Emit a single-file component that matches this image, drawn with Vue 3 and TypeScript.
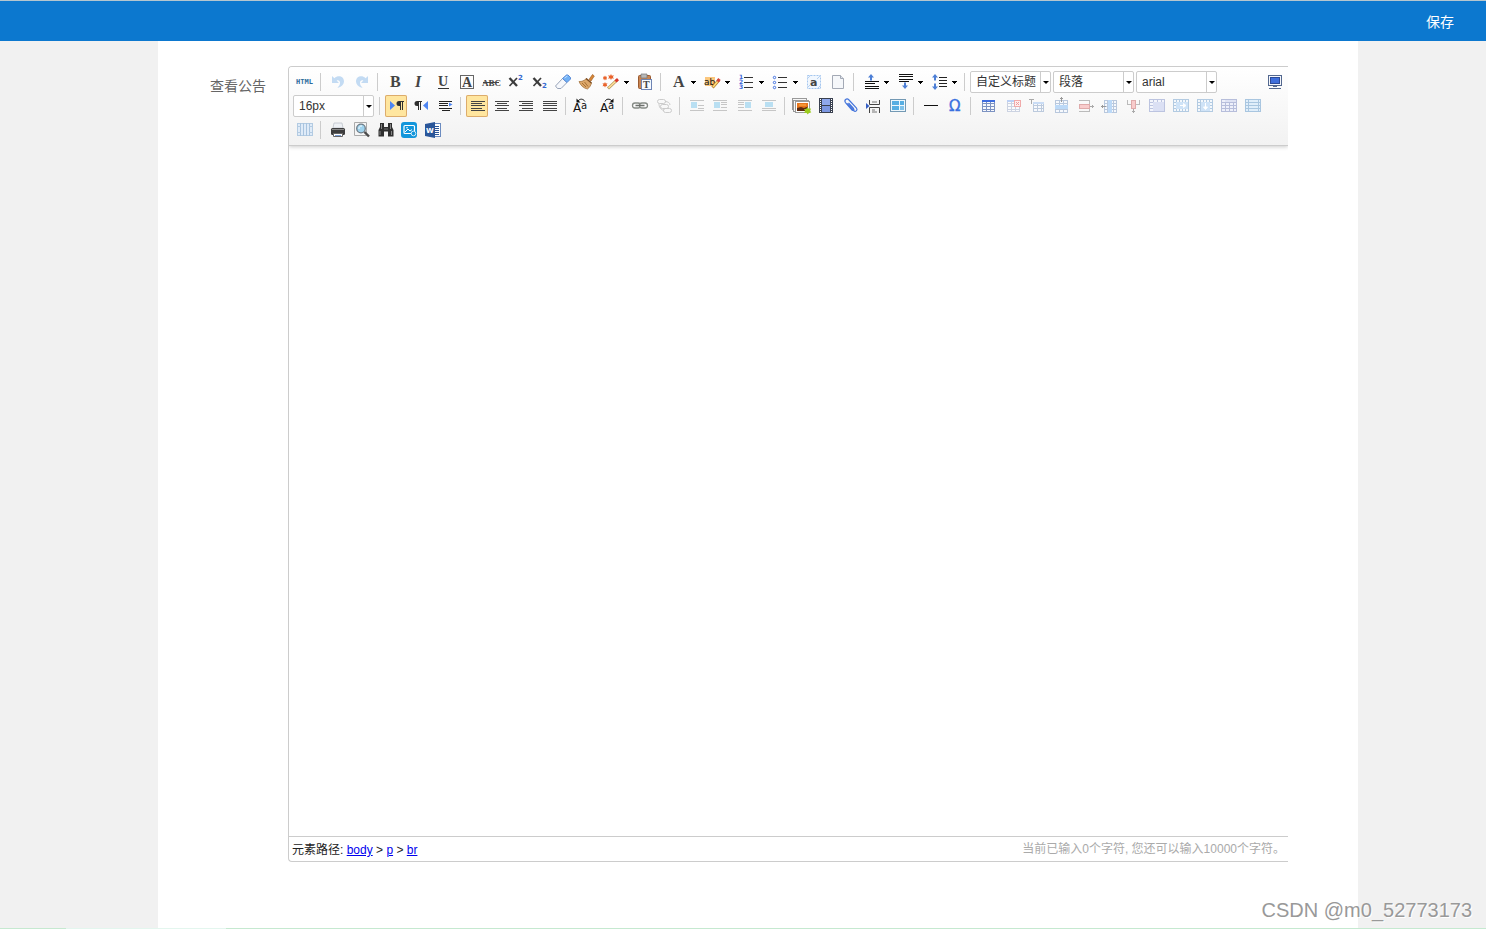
<script setup lang="ts">
import { ref } from 'vue'

interface ButtonItem {
  kind: 'button'
  name: string
  icon: string
  menu?: boolean
  active?: boolean
  disabled?: boolean
}
interface SelectItem {
  kind: 'select'
  name: string
  options: string[]
}
interface SeparatorItem {
  kind: 'sep'
}
type Item = ButtonItem | SelectItem | SeparatorItem

const sep: SeparatorItem = { kind: 'sep' }
const btn = (name: string, icon: string, extra: Partial<ButtonItem> = {}): ButtonItem => ({
  kind: 'button',
  name,
  icon,
  ...extra,
})
const off = { disabled: true }
const menu = { menu: true }

const rect = (x: number, y: number, w: number, h: number, fill: string) =>
  `<rect x="${x}" y="${y}" width="${w}" height="${h}" fill="${fill}"/>`
const crisp = (body: string) => `<g shape-rendering="crispEdges">${body}</g>`
const lines = (rows: number[][], fill: string) => crisp(rows.map(([x, y, w]) => rect(x, y, w, 1, fill)).join(''))
const serif = (t: string, x: number, y: number, size: number, extra = '') =>
  `<text x="${x}" y="${y}" font-family="Liberation Serif, serif" font-weight="bold" font-size="${size}" fill="#444" ${extra}>${t}</text>`
const sans = (t: string, x: number, y: number, size: number, fill: string) =>
  `<text x="${x}" y="${y}" font-family="DejaVu Sans, sans-serif" font-weight="bold" font-size="${size}" fill="${fill}">${t}</text>`
const plain = (t: string, x: number, y: number, size: number, fill: string) =>
  `<text x="${x}" y="${y}" font-family="DejaVu Sans, sans-serif" font-size="${size}" fill="${fill}">${t}</text>`

const frame = (x: number, y: number, w: number, h: number, c: string) =>
  rect(x, y, w, 1, c) + rect(x, y + h - 1, w, 1, c) + rect(x, y, 1, h, c) + rect(x + w - 1, y, 1, h, c)

const undoPath =
  '<path d="M6 5v7h7l-2.400-2.400c2-.8 3.400 .4 3.400 2.500 0 1.700-1 3-2.600 4.900 4-1 6.600-3.800 6.600-6.800 0-5-6-6.700-9.600-3z" fill="#c3dbf3"/>'
const chain =
  '<g fill="#fafafa" stroke="#858a85" stroke-width="1.300"><rect x="4.500" y="8" width="8" height="5" rx="2.500"/><rect x="11.500" y="8" width="8" height="5" rx="2.500"/></g><path d="M7.500 10.500h9" stroke="#6d716d" stroke-width="1.300"/>'
const pilcrow = (x: number) =>
  `<g transform="translate(${x} 0)"><path d="M8 6v1h-1v8h-1v-8h-1v8h-1v-4h-1a2.500 2.500 0 0 1 0-5z" fill="#2f2f2f"/></g>`
const upArrow = (x: number, y: number) => `<path d="M${x} ${y}l3 3.500h-2v3h-2v-3h-2z" fill="#4d7fd6"/>`
const downArrow = (x: number, y: number) => `<path d="M${x} ${y}l3-3.500h-2v-3h-2v3h-2z" fill="#4d7fd6"/>`
const xMark = '<path d="M6.500 7l7.500 8" stroke="#3b3b3b" stroke-width="2.400"/><path d="M14 7l-7.500 8" stroke="#3b3b3b" stroke-width="1.700"/>'

const alignRows = [6, 8, 10, 13, 15]
const grid = (x: number, y: number, w: number, h: number, c: string, bg: string, step = 4) => {
  let s = rect(x, y, w, h, bg) + frame(x, y, w, h, c)
  for (let i = step; i < w - 1; i += step) s += rect(x + i, y, 1, h, c)
  for (let i = 3; i < h - 1; i += 3) s += rect(x, y + i, w, 1, c)
  return s
}
const cellGrid = (inner: string) => crisp(grid(5, 4, 16, 13, '#b3cbe2', '#f4f8fc', 3) + inner)

const icons = {
  source: '<text x="3" y="13" font-family="DejaVu Sans Mono, monospace" font-weight="bold" font-size="7" fill="#2d6a9c">HTML</text>',
  undo: undoPath,
  redo: `<g transform="translate(24 0) scale(-1 1)">${undoPath}</g>`,
  bold: serif('B', 7, 16, 16),
  italic: serif('I', 8, 16, 16, 'font-style="italic"'),
  underline: serif('U', 7, 15, 14) + crisp(rect(7, 17, 11, 1, '#333')),
  boxed: '<rect x="5.500" y="4.500" width="13" height="13" fill="none" stroke="#666"/>' + serif('A', 7, 16, 14),
  strike: serif('ABC', 3, 15, 9) + crisp(rect(4, 11, 16, 1, '#444')),
  sup: xMark + sans('2', 15, 9, 7, '#3568d0'),
  sub: xMark + sans('2', 15, 17, 7, '#3568d0'),
  eraser:
    '<path d="M4.500 15l7-7.500 4.500 4-6 6h-3.500z" fill="#f6f8fc" stroke="#98a3b8"/><path d="M11.500 7.500l4-3.500h1.500l2.500 2.500v1.500l-3.500 3.500z" fill="#6fb0f5" stroke="#5a8ad6"/><path d="M13.500 7l3-2" stroke="#c4e2ff"/>',
  brush:
    '<path d="M14 8.500l3.500-5 1.800 1.500-3.300 5z" fill="#d88635" stroke="#a2622a" stroke-width=".7"/><path d="M4 10.500c3 .2 5-.8 7.500-3l5 4.500c-.6 2.500-2 4.500-4 6-4-.8-7-3.500-8.500-7.500z" fill="#dca76a" stroke="#9c6a35" stroke-width=".7"/><path d="M7 12l4 4M9.500 11l3.500 4.500" stroke="#9a6328" stroke-width=".8"/><path d="M11 7.500l5.500 4.500" stroke="#7a4a22" stroke-width="1.400"/>',
  wand:
    '<path d="M12 3l.9 1.700 2-.5-1 1.800 1 1.700-2-.4-.9 1.700-.9-1.700-2 .4 1-1.700-1-1.800 2 .5zM6 4.500l.7 1.300h1.500l-.8 1.300.8 1.300-1.500-.1-.7 1.200-.7-1.200h-1.500l.8-1.200-.8-1.300h1.500zM6 11l.8 1.500 1.700-.2-.9 1.400.9 1.500-1.700-.2-.8 1.500-.8-1.500-1.700.2.900-1.500-.9-1.400 1.700.2z" fill="#e9632b"/><path d="M9 17.500l9-8.500" stroke="#b79a60" stroke-width="3"/><path d="M9.500 17l7.500-7" stroke="#ffe09a" stroke-width="1.500"/><path d="M16.500 10.500l2.500-2.300" stroke="#d8372b" stroke-width="3"/>',
  paste:
    '<rect x="5.500" y="4.500" width="12" height="13" rx="1" fill="#c98552" stroke="#9a5a30"/><path d="M8 3h6v4h-6z" fill="#b8b8b8" stroke="#777" stroke-width=".7"/><rect x="8.500" y="8.500" width="10" height="10" fill="#f7faff" stroke="#6e84b4"/>' +
    serif('T', 10, 17, 10),
  fontColor: serif('A', 7, 16, 16),
  highlight:
    crisp(rect(5, 6, 10, 9, '#fbc77e')) +
    plain('ab', 4, 14, 9, '#111') +
    '<path d="M12.500 16.500l6.500-7.500" stroke="#b67a2c" stroke-width="3"/><path d="M13 16l5-6" stroke="#ffe07c" stroke-width="1.500"/><path d="M17.500 10.500l2-2.500" stroke="#d7453b" stroke-width="3"/>',
  ordered:
    sans('1', 5, 8, 6, '#3b66d8') + sans('2', 5, 13, 6, '#3b66d8') + sans('3', 5, 18, 6, '#3b66d8') +
    lines([[10, 6, 9], [10, 11, 9], [10, 16, 9]], '#333'),
  unordered:
    '<g fill="#fff" stroke="#3f6fe0"><circle cx="6.500" cy="6.500" r="1.200"/><circle cx="6.500" cy="11.500" r="1.200"/><circle cx="6.500" cy="16.500" r="1.200"/></g>' +
    lines([[10, 6, 9], [10, 11, 9], [10, 16, 9]], '#333'),
  selectAll:
    '<rect x="5.500" y="4.500" width="13" height="13" fill="#f1f7fe" stroke="#a4c6ef" stroke-dasharray="2 1"/><path d="M5 8l4-4M5 17l3-3M15 18l4-4M15 8l4-4" stroke="#b4d0f2"/>' +
    sans('a', 8, 15, 11, '#444'),
  clearDoc:
    '<path d="M6.500 4.500h8l3 3v10h-11z" fill="#f5f7fa" stroke="#a3a9b5"/><path d="M14.500 4.500v3h3" fill="#dfe4ec" stroke="#a3a9b5"/>',
  spaceTop: upArrow(12, 3) + lines([[6, 10, 14], [6, 12, 10], [6, 15, 14], [6, 17, 14]], '#111'),
  spaceBottom: lines([[6, 3, 14], [6, 5, 14], [6, 8, 14], [6, 10, 10]], '#111') + downArrow(12, 18),
  lineHeight: upArrow(8, 3) + downArrow(8, 19) + lines([[12, 6, 8], [12, 9, 8], [12, 12, 8], [12, 15, 8]], '#222'),
  ltr: '<path d="M5 6v9l5-4.500z" fill="#4f86f2"/>' + pilcrow(11),
  rtl: pilcrow(5) + '<path d="M19 6v9l-5-4.500z" fill="#4f86f2"/>',
  indent:
    lines([[6, 6, 13], [6, 8, 9], [6, 10, 9], [6, 13, 13], [9, 15, 8]], '#222') +
    '<path d="M16 7.500l3.500 2-3.500 2z" fill="#4f86f2"/>',
  alignLeft: lines(alignRows.map((y, i) => [5, y, i % 2 ? 11 : 14]), '#444'),
  alignCenter: lines(alignRows.map((y, i) => [i % 2 ? 7 : 5, y, i % 2 ? 10 : 14]), '#444'),
  alignRight: lines(alignRows.map((y, i) => [i % 2 ? 8 : 5, y, i % 2 ? 11 : 14]), '#444'),
  justify: lines(alignRows.map((y) => [5, y, 14]), '#444'),
  upper:
    plain('A', 2, 17, 12, '#111') + plain('a', 10, 14, 10, '#111') +
    '<path d="M7 6c2-2.500 5-2.500 7 .5" fill="none" stroke="#111"/><path d="M5.500 3.500v4h4z" fill="#111"/>',
  lower:
    plain('A', 5, 17, 12, '#111') + plain('a', 13, 14, 10, '#111') +
    '<path d="M10 6.500c1-3 5-3 7-.5" fill="none" stroke="#111"/><path d="M18.500 3.500v4h-4z" fill="#111"/>',
  link: chain,
  unlink:
    '<g fill="none" stroke="#cbcbcb"><rect x="5.500" y="4.500" width="8" height="4" rx="2"/><rect x="11.500" y="13.500" width="8" height="4" rx="2"/><rect x="8.500" y="9.500" width="8" height="4" rx="2"/><path d="M13 6.500c3 0 5 1.500 5 3.500M7 8.500c0 3 1 6 5 7"/></g>',
  imgNone: lines([[5, 5, 14], [13, 10, 6], [13, 13, 6], [5, 15, 14]], '#c6c6c6') + crisp(rect(6, 7, 6, 6, '#b9dff2')),
  imgLeft: lines([[4, 5, 14], [12, 7, 6], [12, 9, 6], [12, 12, 6], [4, 15, 14]], '#c6c6c6') + crisp(rect(5, 7, 6, 6, '#b9dff2')),
  imgRight: lines([[5, 5, 14], [5, 7, 6], [5, 9, 6], [5, 12, 6], [5, 15, 14]], '#c6c6c6') + crisp(rect(12, 7, 6, 6, '#b9dff2')),
  imgCenter: lines([[5, 5, 14], [5, 13, 14], [5, 15, 14]], '#c6c6c6') + crisp(rect(8, 7, 8, 5, '#b9dff2')),
  image:
    '<g stroke="#999" fill="#f7f7f7"><rect x="2.500" y="3.500" width="14" height="11"/><rect x="3.500" y="5.500" width="15" height="11"/></g><rect x="5.500" y="6.500" width="14" height="11" fill="#fff" stroke="#9a9a9a"/><rect x="7" y="8" width="11" height="8" fill="#e8761d"/><path d="M7 16v-3l4-1 3 1 4-1.500v4.500z" fill="#5b2b10"/><path d="M9 10h7" stroke="#ffb24d"/><path d="M17.500 12l1.200 1.800 2.300-.3-.8 2.200 1.100 1.800-2.200.2-1.300 1.900-1.400-1.800-2.200.1.800-2.100-1-1.900 2.200.1z" fill="#9bcc1d"/>',
  video:
    crisp(
      rect(5, 3, 14, 15, '#3a4150') + rect(8, 4, 8, 6, '#8fa8ec') + rect(8, 11, 8, 6, '#7c97e2') +
        [4, 6, 8, 10, 12, 14, 16].map((y) => rect(6, y, 1, 1, '#fff') + rect(17, y, 1, 1, '#fff')).join('')
    ),
  attach:
    '<path d="M9 8.500l6.500 7c2 2 4.500-.2 3-2.300l-7.500-8.200c-2.500-2.400-5.200.3-3.500 2.600l6.500 7.400c1.500 1.200 2.500-.2 1.500-1.500l-5-5.500" fill="none" stroke="#4676dc" stroke-width="1.200"/>',
  pageBreak:
    '<path d="M4 8v6l3.500-3z" fill="#355fc4"/><path d="M7.500 5v4.500h10v-4.500M7.500 18v-5.500h10v5.500" fill="#f5f5f5" stroke="#444"/><path d="M10 7h5M10 15h3M10 17h5" stroke="#777"/>',
  template:
    '<rect x="4.500" y="4.500" width="15" height="12" fill="#eef7fc" stroke="#7399b4"/>' +
    crisp(rect(6, 6, 7, 4, '#57aee2') + rect(6, 11, 7, 4, '#57aee2') + rect(14, 6, 4, 4, '#57aee2') + rect(14, 11, 4, 4, '#7fc2ea')),
  rule: crisp(rect(5, 10, 14, 1, '#111')),
  omega: `<text x="6" y="16" font-family="DejaVu Sans, sans-serif" font-size="15" fill="#3a70e0" stroke="#3a70e0" stroke-width=".4">Ω</text>`,
  table: crisp(grid(6, 5, 13, 12, '#7d93c2', '#f7f9fd', 4) + rect(6, 5, 13, 2, '#3d6cdf')),
  deleteTable:
    crisp(grid(7, 5, 13, 12, '#ccd3e2', '#fafbfd', 4) + rect(7, 5, 8, 2, '#bcd0f5') + rect(14, 5, 7, 7, '#fdeeee') + frame(14, 5, 7, 7, '#f0aaaa')) +
    '<path d="M16 7l3 3M19 7l-3 3" stroke="#f09a9a"/>',
  beforeTable:
    crisp(rect(5, 4, 5, 1, '#aaa') + rect(7, 4, 1, 5, '#aaa') + grid(9, 7, 11, 10, '#bccadd', '#f7f9fc', 4) + rect(9, 7, 11, 2, '#c9dcf5')),
  insertRow:
    crisp(grid(7, 5, 13, 13, '#b9c8dd', '#f6f9fd', 4) + rect(7, 10, 13, 4, '#bcd9f7') + rect(13, 2, 1, 5, '#999') + rect(12, 3, 3, 1, '#999')),
  deleteRow:
    crisp(rect(7, 5, 11, 1, '#bbb') + rect(17, 5, 1, 12, '#bbb') + rect(7, 16, 11, 1, '#bbb') + rect(7, 9, 11, 5, '#f8cccc') + frame(7, 9, 11, 5, '#dfaaaa') + rect(18, 11, 4, 1, '#aaa') + rect(20, 10, 1, 3, '#aaa')),
  insertCol:
    crisp(grid(8, 5, 13, 13, '#b9c8dd', '#f6f9fd', 3) + rect(12, 5, 4, 13, '#bcd9f7') + rect(5, 11, 5, 1, '#999') + rect(6, 10, 1, 3, '#999')),
  deleteCol:
    crisp(rect(7, 5, 1, 5, '#bbb') + rect(7, 9, 13, 1, '#bbb') + rect(19, 5, 1, 5, '#bbb') + rect(11, 5, 5, 9, '#f8cccc') + frame(11, 5, 5, 9, '#dfaaaa') + rect(13, 14, 1, 4, '#aaa') + rect(12, 16, 3, 1, '#aaa')),
  merge: crisp(grid(5, 4, 16, 13, '#bcc4e0', '#f3f5fc', 4) + rect(9, 7, 11, 9, '#dbe0f4')),
  mergeRight: cellGrid(rect(8, 7, 12, 7, '#cfe3f7')) + '<path d="M12 10.500h4M15.500 8.500l2.500 2-2.500 2z" stroke="#fff" fill="#fff"/>',
  mergeDown: cellGrid(rect(9, 7, 9, 9, '#cfe3f7')) + '<path d="M13.500 8v4M11.500 12l2 2.500 2-2.500z" stroke="#fff" fill="#fff"/>',
  splitCells: crisp(grid(5, 4, 16, 13, '#b7bedb', '#eef0fa', 4) + rect(9, 5, 11, 2, '#dfe3f4')),
  splitRows: crisp(grid(5, 4, 16, 13, '#a9c6e0', '#e0eefa', 30) + rect(8, 4, 1, 13, '#a9c6e0') + rect(18, 4, 1, 13, '#a9c6e0')),
  splitCols:
    crisp(rect(4, 4, 16, 13, '#dfebf8') + frame(4, 4, 16, 13, '#b3cbe2') + [7, 10, 13, 16].map((x) => rect(x, 4, 1, 13, '#a9c4df')).join('') + rect(4, 7, 4, 1, '#b3cbe2') + rect(4, 13, 4, 1, '#b3cbe2') + rect(16, 7, 4, 1, '#b3cbe2') + rect(16, 13, 4, 1, '#b3cbe2')),
  print:
    '<path d="M8 4h8l1 5h-10z" fill="#eef1f5" stroke="#bfc4cc" stroke-width=".8"/><rect x="5" y="9" width="14" height="7" rx="1.500" fill="#3d3d3d"/><path d="M6 10.500h12" stroke="#8a8a8a"/><path d="M7.500 14.500h9v3h-9z" fill="#fff" stroke="#666"/><path d="M9 16.500h6" stroke="#7a9ed6"/>',
  preview:
    '<path d="M4.500 3.500h12v13h-12z" fill="#f5f5f5" stroke="#aaa"/><circle cx="11" cy="9.500" r="4.300" fill="#9fd3ee" stroke="#6d7b86" stroke-width="1.300"/><path d="M9 10a2.500 2.500 0 0 1 3-3" stroke="#fff" fill="none"/><path d="M14.500 13l4.500 4.500" stroke="#4b4b4b" stroke-width="2.400"/>',
  search:
    '<path d="M6 4h4v4h4v-4h4v4l1.500 3v6.500h-5.500v-5h-4v5h-5.500v-6.500l1.500-3z" fill="#2f2f2f"/><path d="M7.500 5v5M16.500 5v5M6 12v4M17.500 12v4" stroke="#858585"/><path d="M10 10h4" stroke="#777"/>',
  drafts:
    '<rect x="3" y="3" width="16" height="16" rx="3" fill="#1296db"/><rect x="6" y="6.500" width="10.500" height="8" rx="1" fill="none" stroke="#fff" stroke-width="1.200"/><path d="M7 13l3-3 2 2 2-1.500" stroke="#fff" fill="none"/><circle cx="9" cy="8.800" r=".8" fill="#fff"/><circle cx="15.500" cy="14.500" r="2.300" fill="#1296db" stroke="#cfeaf9"/>',
  word:
    '<rect x="11.500" y="4.500" width="7" height="13" fill="#fff" stroke="#6c8cc0"/><path d="M12 7h5M12 9h5M12 11h5M12 13h5M12 15h5" stroke="#2a5699" shape-rendering="crispEdges"/><path d="M3 5l10-2v16l-10-2z" fill="#2a5699"/>' +
    sans('W', 4, 14, 7, '#fff'),
  fullscreen:
    '<rect x="4.500" y="4.500" width="13" height="10" fill="#f4f6fb" stroke="#53688f"/><rect x="6.500" y="6.500" width="9" height="6" fill="#3f6fdc" stroke="#2b4a97"/><path d="M9 15.500h4M5 17.500h12" stroke="#53688f"/>',
}

const rows: Item[][] = [
  [
    btn('源代码', icons.source), sep,
    btn('撤销', icons.undo, off), btn('重做', icons.redo, off), sep,
    btn('加粗', icons.bold), btn('斜体', icons.italic), btn('下划线', icons.underline),
    btn('字符边框', icons.boxed), btn('删除线', icons.strike), btn('上标', icons.sup), btn('下标', icons.sub),
    btn('清除格式', icons.eraser), btn('格式刷', icons.brush), btn('自动排版', icons.wand, menu),
    btn('纯文本粘贴', icons.paste), sep,
    btn('字体颜色', icons.fontColor, menu), btn('背景色', icons.highlight, menu),
    btn('有序列表', icons.ordered, menu), btn('无序列表', icons.unordered, menu),
    btn('全选', icons.selectAll), btn('清空文档', icons.clearDoc), sep,
    btn('段前距', icons.spaceTop, menu), btn('段后距', icons.spaceBottom, menu), btn('行间距', icons.lineHeight, menu), sep,
    { kind: 'select', name: '标题样式', options: ['自定义标题'] },
    { kind: 'select', name: '段落格式', options: ['段落', '标题 1', '标题 2', '标题 3'] },
    { kind: 'select', name: '字体', options: ['arial', 'times new roman', '宋体'] },
  ],
  [
    { kind: 'select', name: '字号', options: ['16px', '12px', '14px', '18px', '24px'] }, sep,
    btn('从左向右输入', icons.ltr, { active: true }), btn('从右向左输入', icons.rtl), btn('首行缩进', icons.indent), sep,
    btn('居左对齐', icons.alignLeft, { active: true }), btn('居中对齐', icons.alignCenter),
    btn('居右对齐', icons.alignRight), btn('两端对齐', icons.justify), sep,
    btn('字母大写', icons.upper), btn('字母小写', icons.lower), sep,
    btn('超链接', icons.link), btn('取消链接', icons.unlink, off), sep,
    btn('默认', icons.imgNone, off), btn('左浮动', icons.imgLeft, off), btn('右浮动', icons.imgRight, off), btn('居中', icons.imgCenter, off), sep,
    btn('多图上传', icons.image), btn('视频', icons.video), btn('附件', icons.attach), btn('分页', icons.pageBreak), btn('模板', icons.template), sep,
    btn('分隔线', icons.rule), btn('特殊字符', icons.omega), sep,
    btn('插入表格', icons.table), btn('删除表格', icons.deleteTable, off), btn('表格前插入行', icons.beforeTable, off),
    btn('前插入行', icons.insertRow, off), btn('删除行', icons.deleteRow, off), btn('前插入列', icons.insertCol, off),
    btn('删除列', icons.deleteCol, off), btn('合并多个单元格', icons.merge, off), btn('右合并单元格', icons.mergeRight, off),
    btn('下合并单元格', icons.mergeDown, off), btn('完全拆分单元格', icons.splitCells, off), btn('拆分成行', icons.splitRows, off),
  ],
  [
    btn('拆分成列', icons.splitCols, off), sep,
    btn('打印', icons.print), btn('预览', icons.preview), btn('查询替换', icons.search),
    btn('草稿箱', icons.drafts), btn('导入 Word', icons.word),
  ],
]

const caret = '<path d="M25 10h5v1h-1v1h-1v1h-1v-1h-1v-1h-1z" fill="#000" shape-rendering="crispEdges"/>'
const path = ['body', 'p', 'br']
const content = ref('')
</script>

<template>
  <div class="page">
    <header class="topbar">
      <button type="button" class="save">保存</button>
    </header>

    <main class="stage">
      <section class="sheet">
        <label class="field-label" for="notice">查看公告</label>
        <div class="editor">
          <div class="toolbar" role="toolbar" aria-label="编辑工具栏">
            <div v-for="(row, r) in rows" :key="r" class="tool-row">
              <template v-for="(item, i) in row" :key="i">
                <span v-if="item.kind === 'sep'" class="sep"></span>
                <span v-else-if="item.kind === 'select'" class="combo">
                  <select :aria-label="item.name">
                    <option v-for="o in item.options" :key="o">{{ o }}</option>
                  </select>
                </span>
                <button
                  v-else
                  type="button"
                  class="tool"
                  :class="{ active: item.active, wide: item.menu }"
                  :title="item.name"
                  :aria-label="item.name"
                  :disabled="item.disabled"
                >
                  <svg
                    :width="item.menu ? 32 : 22"
                    height="22"
                    :viewBox="item.menu ? '0 0 32 22' : '0 0 22 22'"
                    aria-hidden="true"
                    v-html="item.menu ? item.icon + caret : item.icon"
                  ></svg>
                </button>
              </template>
              <button v-if="r === 0" type="button" class="tool last" title="全屏" aria-label="全屏">
                <svg width="22" height="22" viewBox="0 0 22 22" aria-hidden="true" v-html="icons.fullscreen"></svg>
              </button>
            </div>
          </div>

          <textarea id="notice" v-model="content" class="canvas"></textarea>

          <div class="status">
            <nav class="crumbs" aria-label="元素路径">
              元素路径:
              <template v-for="(p, i) in path" :key="p">
                <template v-if="i > 0"> &gt; </template><a href="#">{{ p }}</a>
              </template>
            </nav>
            <span class="count">当前已输入{{ content.length }}个字符, 您还可以输入{{ 10000 - content.length }}个字符。</span>
          </div>
        </div>
      </section>
    </main>

    <div class="edge"><span></span></div>
    <div class="watermark">CSDN @m0_52773173</div>
  </div>
</template>

<style>
body {
  margin: 0;
}
</style>

<style scoped>
.page {
  position: relative;
  display: flex;
  flex-direction: column;
  min-height: 100vh;
  background: #f1f1f1;
  font-family: "Liberation Sans", Arial, "Noto Sans CJK SC", sans-serif;
}
.topbar {
  display: flex;
  justify-content: flex-end;
  height: 40px;
  padding-right: 32px;
  border-top: 1px solid #b5c6cf;
  background: #0c78cf;
}
.save {
  padding: 0;
  border: 0;
  background: none;
  color: #fff;
  font: inherit;
  font-size: 14px;
  cursor: pointer;
}
.stage {
  flex: 1;
  display: flex;
  padding: 0 128px 0 158px;
}
.sheet {
  flex: 1;
  display: flex;
  min-width: 0;
  padding: 25px 70px 66px 0;
  background: #fff;
}
.field-label {
  flex: none;
  box-sizing: border-box;
  width: 130px;
  padding: 10px 22px 0 0;
  color: #666;
  font-size: 14px;
  line-height: 20px;
  text-align: right;
}
.editor {
  flex: 1;
  display: flex;
  flex-direction: column;
  min-width: 0;
  overflow: hidden;
  border: 1px solid #ccc;
  border-right: 0;
  border-radius: 4px 0 0 4px;
}
.toolbar {
  position: relative;
  display: flex;
  flex-direction: column;
  gap: 2px;
  padding: 4px 0 4px 4px;
  border-bottom: 1px solid #ccc;
  background: linear-gradient(#fff, #f2f2f2);
  box-shadow: 0 1px 4px rgba(0, 0, 0, 0.2);
}
.tool-row {
  display: flex;
  height: 22px;
}
.tool {
  flex: none;
  box-sizing: border-box;
  width: 22px;
  height: 22px;
  margin: 0 2px 0 0;
  padding: 0;
  border: 0;
  background: none;
}
.tool.wide {
  width: 32px;
}
.tool.active {
  border-radius: 2px;
  background: #ffe69f;
  box-shadow: inset 0 0 0 1px #dcac6c;
}
.tool.last {
  margin-left: auto;
}
.tool svg {
  display: block;
}
.sep {
  flex: none;
  width: 1px;
  height: 18px;
  margin: 2px 5px 0 3px;
  background: #ccc;
}
.combo {
  position: relative;
  flex: none;
  box-sizing: border-box;
  width: 81px;
  height: 22px;
  margin-right: 2px;
  border: 1px solid #ccc;
  border-radius: 2px;
  background: #fff;
}
.combo select {
  appearance: none;
  width: 100%;
  height: 20px;
  margin: 0;
  padding: 0 12px 0 5px;
  border: 0;
  background: linear-gradient(#ccc, #ccc) right 9px top 0 / 1px 100% no-repeat;
  color: #333;
  font: inherit;
  font-size: 12px;
}
.combo::after {
  content: "";
  position: absolute;
  top: 9px;
  right: 1px;
  border: 3px solid transparent;
  border-top-color: #000;
  border-bottom: 0;
  pointer-events: none;
}
.canvas {
  flex: 1;
  display: block;
  width: 100%;
  box-sizing: border-box;
  padding: 8px;
  border: 0;
  outline: 0;
  resize: none;
  background: #fff;
  font: inherit;
  font-size: 16px;
}
.status {
  display: flex;
  justify-content: space-between;
  height: 24px;
  padding: 0 3px;
  border-top: 1px solid #ccc;
  font-size: 12px;
  line-height: 24px;
}
.crumbs {
  color: #222;
  line-height: 26px;
}
.crumbs a {
  color: #0000ee;
}
.count {
  color: #aaa;
}
.edge {
  height: 1px;
  padding-left: 66px;
  background: #c5e9d0;
}
.edge span {
  display: block;
  width: 160px;
  height: 1px;
  background: #e3f6ee;
}
.watermark {
  position: absolute;
  right: 14px;
  bottom: 4px;
  color: #999;
  font-family: "Liberation Sans", Arial, sans-serif;
  font-size: 20px;
  line-height: 30px;
  text-shadow: 1px 1px 0 #fff;
}
</style>
